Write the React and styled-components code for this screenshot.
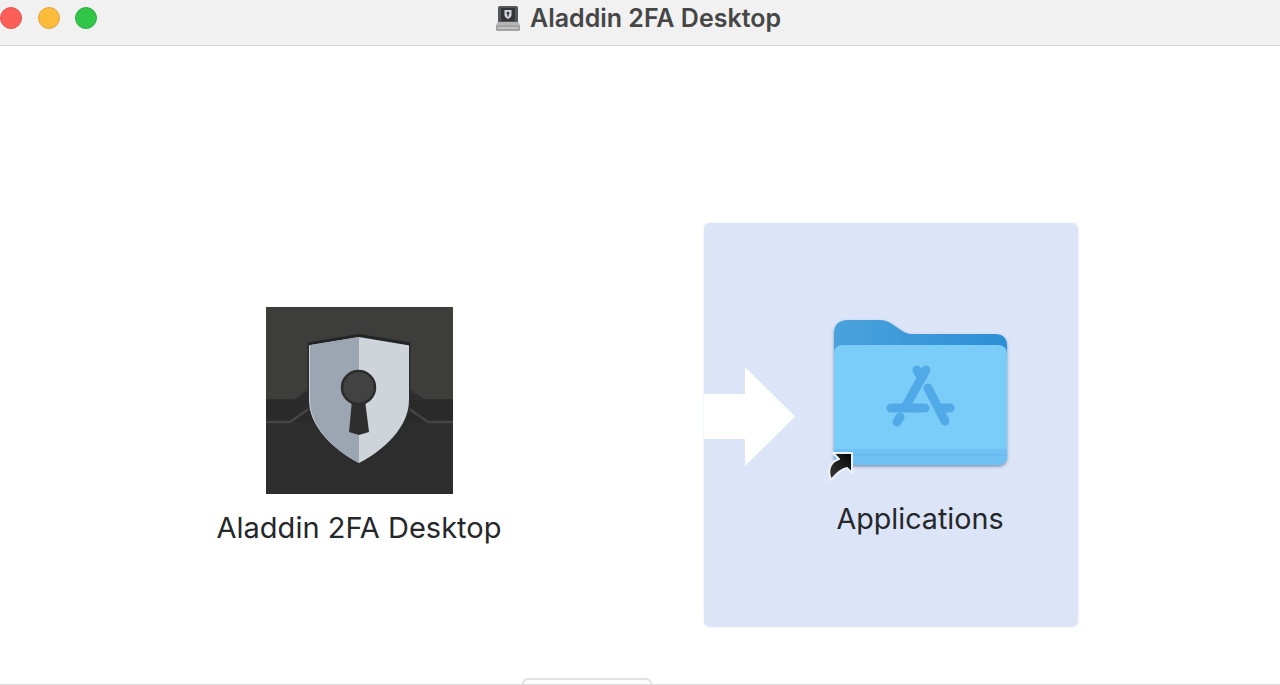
import React from "react";
import styled, { createGlobalStyle } from "styled-components";

const Global = createGlobalStyle`
  html, body {
    margin: 0;
    padding: 0;
    background: #fff;
    overflow: hidden;
  }
`;

const Window = styled.div`
  position: relative;
  width: 1280px;
  height: 685px;
  display: flex;
  flex-direction: column;
  box-sizing: border-box;
  border-bottom: 1px solid #dcdcdc;
  font-family: Inter, "Liberation Sans", sans-serif;
  overflow: hidden;
`;

const TitleBar = styled.div`
  height: 46px;
  flex: none;
  box-sizing: border-box;
  padding-bottom: 9px;
  background: #f1f1f1;
  border-bottom: 1px solid #d8d8d8;
  display: grid;
  grid-template-columns: 1fr auto 1fr;
  align-items: center;
`;

const Lights = styled.div`
  display: flex;
  gap: 15.5px;
`;

const Light = styled.span`
  width: 22px;
  height: 22px;
  border-radius: 50%;
  box-sizing: border-box;
  background: ${(p) => p.$color};
  border: 1px solid ${(p) => p.$edge};
`;

const Title = styled.div`
  display: flex;
  align-items: center;
  gap: 9px;
  margin-left: -4px;
  font-size: 25px;
  font-weight: 600;
  color: #464646;
  white-space: nowrap;
`;

const Body = styled.div`
  flex: 1;
  display: flex;
  align-items: flex-start;
  padding-left: 209px;
`;

const AppColumn = styled.div`
  width: 300px;
  margin-top: 261px;
  display: flex;
  flex-direction: column;
  align-items: center;
`;

const Label = styled.div`
  font-size: ${(p) => p.$size}px;
  line-height: 34px;
  color: #25272a;
  white-space: nowrap;
  margin-top: ${(p) => p.$top}px;
`;

const DropPanel = styled.div`
  width: 374px;
  height: 404px;
  margin-top: 177px;
  margin-left: 195px;
  border-radius: 6px;
  background: #dce4f8;
  box-shadow: 0 0 3px rgba(220, 228, 248, 0.8);
  display: flex;
  align-items: flex-start;
`;

const Arrow = styled.svg`
  flex: none;
  margin-top: 144px;
`;

const FolderColumn = styled.div`
  width: 200px;
  margin-left: 25px;
  margin-top: 87px;
  display: flex;
  flex-direction: column;
  align-items: center;
`;

const Handle = styled.div`
  position: absolute;
  left: 522px;
  bottom: 0;
  width: 130px;
  height: 6px;
  box-sizing: border-box;
  border: 2px solid #e2e2e4;
  border-bottom: none;
  border-radius: 8px 8px 0 0;
  background: #fff;
`;

function DriveIcon() {
  return (
    <svg width="26" height="27" viewBox="0 0 26 27">
      <rect x="3" y="1" width="20" height="17" rx="1.5" fill="#55575b" />
      <rect x="6" y="3" width="14" height="13" fill="#33353a" />
      <path d="M9.5 5h7v5c0 2-2 3-3.500 4-1.500-1-3.500-2-3.500-4z" fill="#d5d8dc" />
      <circle cx="13" cy="8" r="1.500" fill="#3a3a3a" />
      <rect x="12.300" y="8.500" width="1.400" height="3" fill="#3a3a3a" />
      <path d="M3 17h20l2 3H1z" fill="#b4b4b4" />
      <rect x="1" y="20" width="24" height="6" rx="1" fill="#a3a3a3" />
      <rect x="3" y="22.500" width="20" height="1" fill="#dcdcdc" />
    </svg>
  );
}

function ShieldLogo() {
  return (
    <svg width="187" height="187" viewBox="0 0 187 187">
      <rect width="187" height="187" fill="#2d2d2d" />
      <path d="M0 0H187V92H158L143 82H43L29 92H0Z" fill="#3d3d3c" />
      <path d="M0 93H187V115H0Z" fill="#2a2a2a" />
      <path d="M0 115H24L44 101M187 115H162L142 101" fill="none" stroke="#454545" strokeWidth="2.500" />
      <path
        d="M93 29 L43 37 V93 C43 120 68 143 93 156 C118 143 143 120 143 93 V37 Z"
        fill="#cfd3da"
        stroke="#2b2c2e"
        strokeWidth="3"
        paintOrder="stroke"
      />
      <path d="M42 37 L93 28.500 L144 37" fill="none" stroke="#222426" strokeWidth="3" />
      <path d="M93 30 L44 38 V93 C44 120 68 143 93 156 Z" fill="#9ca6b2" />
      <path d="M86 93 L83 125 L93 128 L103 125 L99 93 Z" fill="#2e2e2e" />
      <circle cx="92.500" cy="80.500" r="16.500" fill="#424242" stroke="#2b2b2b" strokeWidth="2.500" />
    </svg>
  );
}

function AppsFolder() {
  return (
    <svg width="200" height="172" viewBox="0 0 200 172">
      <defs>
        <linearGradient id="back" x1="0" y1="0" x2="1" y2="0">
          <stop offset="0" stopColor="#4aa2dc" />
          <stop offset="1" stopColor="#2c8fd5" />
        </linearGradient>
        <linearGradient id="arrowFill" x1="1" y1="0" x2="0" y2="1">
          <stop offset="0" stopColor="#050505" />
          <stop offset="1" stopColor="#3a3a3a" />
        </linearGradient>
        <filter id="soft" x="-10%" y="-10%" width="120%" height="125%">
          <feDropShadow dx="0" dy="1.500" stdDeviation="1.500" floodColor="#3a5a78" floodOpacity="0.6" />
        </filter>
      </defs>
      <g filter="url(#soft)">
        <path
          d="M14 24 Q14 10 28 10 H60 Q66 10 72 14 L81 20 Q86 24 92 24 H175 Q187 24 187 36 V60 H14 Z"
          fill="url(#back)"
        />
        <path
          d="M14 44 Q14 35 23 35 H177 Q187 35 187 44 V146 Q187 155 177 155 H23 Q14 155 14 146 Z"
          fill="#7accf9"
        />
        <path d="M14 139 H187 V146 Q187 155 177 155 H23 Q14 155 14 146 Z" fill="#70c1f3" />
        <path d="M14 145 H187" stroke="#64b6ec" strokeWidth="1" />
      </g>
      <g fill="none" stroke="#52a9e7" strokeWidth="9" strokeLinecap="round">
        <path d="M97 60 L101 67" />
        <path d="M106 60 L86 96" />
        <path d="M108 78 L125 111" />
        <path d="M71 98 H105" />
        <path d="M119 98 H130" />
        <path d="M80 107 L77 112" />
      </g>
      <path
        d="M13 143 H32 V163 L27 158 C21 159 16 164 11 170 C7 160 10 152 19 149 Z"
        fill="url(#arrowFill)"
        stroke="#eef1f8"
        strokeWidth="2"
        strokeLinejoin="round"
      />
    </svg>
  );
}

export default function App() {
  return (
    <Window>
      <Global />
      <TitleBar>
        <Lights>
          <Light $color="#fb5f57" $edge="#e0534d" />
          <Light $color="#fdbb3b" $edge="#e2a53a" />
          <Light $color="#32c648" $edge="#2dad40" />
        </Lights>
        <Title>
          <DriveIcon />
          Aladdin 2FA Desktop
        </Title>
        <span />
      </TitleBar>
      <Body>
        <AppColumn>
          <ShieldLogo />
          <Label $top={17} $size={29}>Aladdin 2FA Desktop</Label>
        </AppColumn>
        <DropPanel>
          <Arrow width="91" height="99" viewBox="0 0 91 99">
            <path d="M0 27 H41 V0 L91 49.500 L41 99 V72 H0 Z" fill="#fff" />
          </Arrow>
          <FolderColumn>
            <AppsFolder />
            <Label $top={20} $size={28.7}>Applications</Label>
          </FolderColumn>
        </DropPanel>
      </Body>
      <Handle />
    </Window>
  );
}
